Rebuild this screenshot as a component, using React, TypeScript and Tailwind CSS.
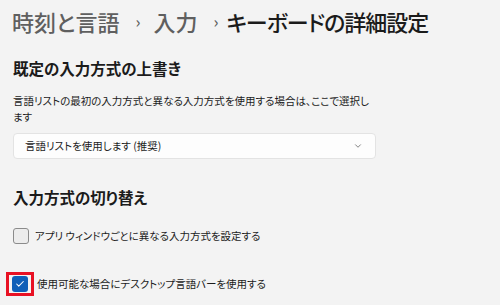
import { ChevronDown, Check } from 'lucide-react';

const font = "font-['Noto_Sans_CJK_JP','Noto_Sans',sans-serif] [font-feature-settings:'palt']";

export default function App() {
  return (
    <div className={`w-[500px] h-[305px] overflow-hidden bg-[#f3f3f3] text-[#1b1b1b] ${font}`}>
      <div className="flex items-center pl-[12px] pt-[5px] h-[37px] text-[22px] font-medium leading-[32px]">
        <span className="text-[#5f5f5f]">時刻と言語</span>
        <span className="ml-[16px] mr-[13px] text-[16px] text-[#5f5f5f]">›</span>
        <span className="text-[#5f5f5f]">入力</span>
        <span className="ml-[16px] mr-[8px] text-[16px] text-[#5f5f5f]">›</span>
        <span className="tracking-[-1px]">キーボードの詳細設定</span>
      </div>

      <div className="px-[13px]">
        <h2 className="mt-[21px] text-[15.5px] font-bold leading-[20px]">既定の入力方式の上書き</h2>
        <p className="mt-[15px] w-[365px] text-[10.5px] leading-[16px]">
          言語リストの最初の入力方式と異なる入力方式を使用する場合は、ここで選択します
        </p>
        <div className="mt-[8px] flex h-[26px] w-[363px] items-center justify-between rounded-[4px] border border-[#e3e3e3] bg-[#fdfdfd] pl-[11px] pr-[12px] text-[10.5px]">
          <span>言語リストを使用します (推奨)</span>
          <ChevronDown className="h-[10px] w-[10px] text-[#6b6b6b]" strokeWidth={2} />
        </div>

        <h2 className="mt-[28px] text-[15.5px] font-bold leading-[20px]">入力方式の切り替え</h2>

        <label className="mt-[21px] flex items-center gap-[6px] text-[10.5px]">
          <span className="h-[16px] w-[16px] rounded-[3px] border border-[#8b8b8b] bg-[#ececec]" />
          <span>アプリ ウィンドウごとに異なる入力方式を設定する</span>
        </label>

        <label className="mt-[28px] -ml-[7px] flex items-center text-[10.5px]">
          <span className="flex h-[24px] w-[28px] items-center justify-center border-[3px] border-[#e81123]">
            <span className="flex h-[16px] w-[16px] items-center justify-center rounded-[3px] bg-[#0f5fb8]">
              <Check className="h-[10px] w-[10px] text-white" strokeWidth={2.5} />
            </span>
          </span>
          <span className="ml-[3px]">使用可能な場合にデスクトップ言語バーを使用する</span>
        </label>
      </div>
    </div>
  );
}
